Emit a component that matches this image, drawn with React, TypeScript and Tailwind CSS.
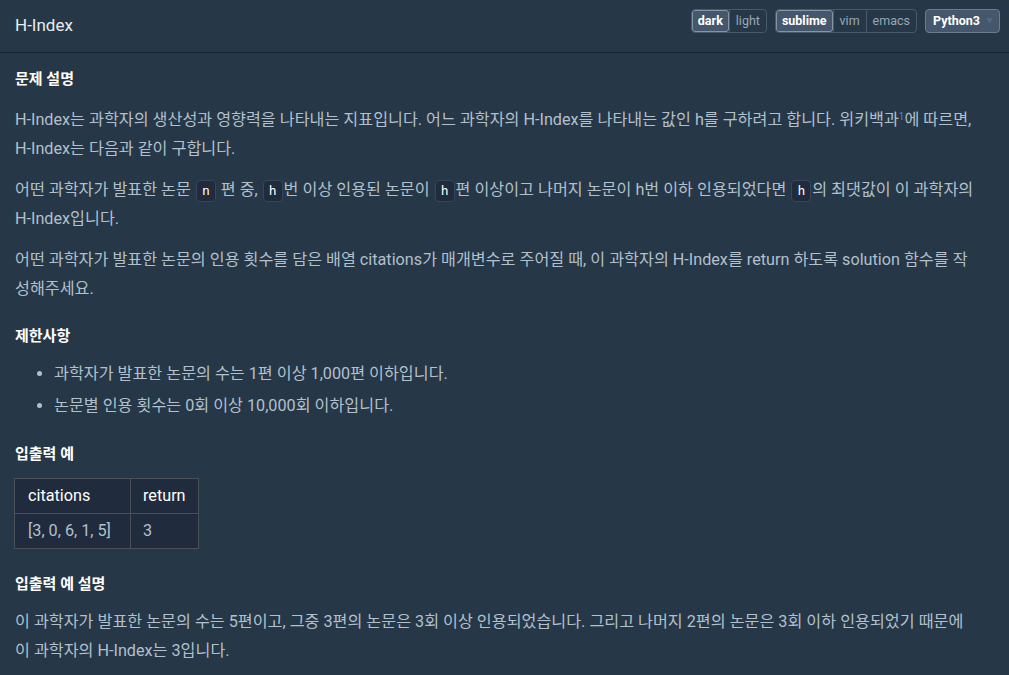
const font = { fontFamily: 'Roboto, "Noto Sans CJK KR", sans-serif' };

function Code({ children }: { children: string }) {
  return (
    <code className="mx-[1px] inline-block h-[22px] rounded-[4px] border border-[#3a4657] bg-[#202b3d] px-[5px] align-middle font-['DejaVu_Sans_Mono',monospace] text-[13px] leading-[20px] text-white">
      {children}
    </code>
  );
}

function Toggle({ items, active }: { items: string[]; active: string }) {
  return (
    <div className="flex h-[24px] overflow-hidden rounded-[4px] border border-[#4a5a6c]">
      {items.map((item, i) => (
        <div
          key={item}
          className={
            item === active
              ? 'flex items-center rounded-[3px] border border-[#8595a6] bg-[#44576c] px-[5px] text-[12.5px] font-bold text-white'
              : 'flex items-center px-[6px] text-[12.5px] text-[#98a8b9] ' + (i > 0 ? 'border-l border-[#4a5a6c]' : '')
          }
        >
          {item}
        </div>
      ))}
    </div>
  );
}

function Heading({ children, className = '' }: { children: string; className?: string }) {
  return <h5 className={'text-[15px] leading-[24px] font-bold text-white ' + className}>{children}</h5>;
}

export default function App() {
  return (
    <div className="min-h-[675px] w-[1009px] bg-[#263747]" style={font}>
      <header className="flex h-[53px] items-center justify-between border-b border-[#172334] pr-[9px] pl-[15px]">
        <h1 className="text-[17px] text-[#e8edf2]">H-Index</h1>
        <div className="mb-[10px] flex items-center gap-[8px]">
          <Toggle items={['dark', 'light']} active="dark" />
          <Toggle items={['sublime', 'vim', 'emacs']} active="sublime" />
          <div className="flex h-[24px] w-[75px] items-center justify-between rounded-[4px] border border-[#6b7c8f] bg-[#44576c] pr-[6px] pl-[7px] text-[12.5px] font-bold text-white">
            Python3
            <span className="text-[7px] text-[#56687c]">▼</span>
          </div>
        </div>
      </header>

      <div className="pt-[14px] pr-[35px] pl-[15px] text-[16.2px] leading-[29px] text-[#b2c0cc]">
        <Heading className="mb-[14px]">문제 설명</Heading>
        <p className="mb-[12px]">
          H-Index는 과학자의 생산성과 영향력을 나타내는 지표입니다. 어느 과학자의 H-Index를 나타내는 값인 h를 구하려고
          합니다. 위키백과<sup className="text-[10px] text-[#3c8be8]">1</sup>에 따르면, H-Index는 다음과 같이 구합니다.
        </p>
        <p className="mb-[12px]">
          어떤 과학자가 발표한 논문 <Code>n</Code> 편 중, <Code>h</Code>번 이상 인용된 논문이 <Code>h</Code>편 이상이고
          나머지 논문이 h번 이하 인용되었다면 <Code>h</Code>의 최댓값이 이 과학자의 H-Index입니다.
        </p>
        <p className="mb-[21px]">
          어떤 과학자가 발표한 논문의 인용 횟수를 담은 배열 citations가 매개변수로 주어질 때, 이 과학자의 H-Index를 return
          하도록 solution 함수를 작성해주세요.
        </p>

        <Heading className="mb-[11px]">제한사항</Heading>
        <ul className="mb-[22px] flex flex-col gap-[3px] pl-[39px]">
          <li className="list-disc">과학자가 발표한 논문의 수는 1편 이상 1,000편 이하입니다.</li>
          <li className="list-disc">논문별 인용 횟수는 0회 이상 10,000회 이하입니다.</li>
        </ul>

        <Heading className="mb-[12px]">입출력 예</Heading>
        <table className="mb-[23px] ml-[-1px] border-collapse bg-[#202b3d] leading-[24px]">
          <thead>
            <tr className="text-white">
              <th className="h-[35px] w-[116px] border border-[#4b5058] px-[13px] text-left font-normal">citations</th>
              <th className="h-[35px] border border-[#4b5058] px-[12px] text-left font-normal">return</th>
            </tr>
          </thead>
          <tbody>
            <tr>
              <td className="h-[35px] border border-[#4b5058] px-[13px]">[3, 0, 6, 1, 5]</td>
              <td className="h-[35px] border border-[#4b5058] px-[12px]">3</td>
            </tr>
          </tbody>
        </table>

        <Heading className="mb-[11px]">입출력 예 설명</Heading>
        <p>
          이 과학자가 발표한 논문의 수는 5편이고, 그중 3편의 논문은 3회 이상 인용되었습니다. 그리고 나머지 2편의 논문은 3회
          이하 인용되었기 때문에 이 과학자의 H-Index는 3입니다.
        </p>
      </div>
    </div>
  );
}
